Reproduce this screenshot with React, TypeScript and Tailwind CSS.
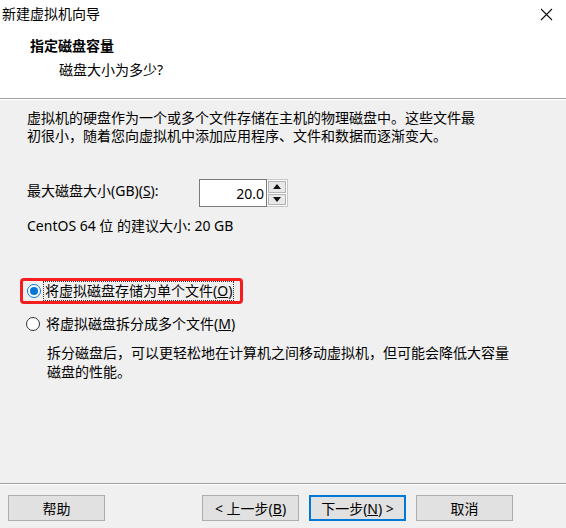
import React from "react";

const font = { fontFamily: '"Noto Sans", "Noto Sans CJK SC", sans-serif' };

function Radio({ checked }: { checked?: boolean }) {
  return (
    <span
      className={`inline-flex items-center justify-center w-[14px] h-[14px] rounded-full border bg-white shrink-0 ${
        checked ? "border-[#0078d7]" : "border-[#333333]"
      }`}
    >
      {checked && <span className="w-[8px] h-[8px] rounded-full bg-[#0078d7]" />}
    </span>
  );
}

function Button({ children, primary }: { children: React.ReactNode; primary?: boolean }) {
  return (
    <div
      className={`w-[97px] h-[26px] flex items-center justify-center bg-[#e1e1e1] text-[14px] text-black ${
        primary ? "border-2 border-[#0078d7]" : "border border-[#adadad]"
      }`}
    >
      {children}
    </div>
  );
}

export default function App() {
  return (
    <div className="w-[566px] h-[528px] bg-[#f0f0f0] flex flex-col text-black overflow-hidden" style={font}>
      {/* header */}
      <div className="bg-white h-[99px] flex flex-col border-b border-[#a0a0a0]">
        <div className="h-[26px] flex items-center justify-between pl-[2px] pr-[13px]">
          <span className="text-[14px] leading-[20px] pt-[2px]">新建虚拟机向导</span>
          <svg width="13" height="13" viewBox="0 0 13 13" className="mt-[2px]">
            <path d="M1 1 L12 12 M12 1 L1 12" stroke="#111" strokeWidth="1.1" />
          </svg>
        </div>
        <div className="pl-[30px] mt-[10px] text-[14px] leading-[20px] font-bold">指定磁盘容量</div>
        <div className="pl-[59px] mt-[4px] text-[14px] leading-[20px]">磁盘大小为多少?</div>
      </div>
      <div className="h-px bg-white" />

      {/* body */}
      <div className="flex-1 flex flex-col pl-[27px] pt-[9px]">
        <p className="text-[14px] leading-[18px] w-[460px]">
          虚拟机的硬盘作为一个或多个文件存储在主机的物理磁盘中。这些文件最
          <br />
          初很小，随着您向虚拟机中添加应用程序、文件和数据而逐渐变大。
        </p>

        <div className="flex items-center mt-[34px] h-[28px]">
          <span className="text-[14px] w-[172px] -mt-[5px]">
            最大磁盘大小(GB)(<u>S</u>):
          </span>
          <div className="flex h-[28px]">
            <div className="w-[68px] h-[28px] border border-[#7a7a7a] bg-white flex items-center justify-end pr-[2px] text-[14px]">
              20.0
            </div>
            <div className="w-[21px] h-[28px] border border-l-0 border-[#c8c8c8] bg-white flex flex-col p-px gap-px">
              <div className="flex-1 bg-[#e8e8e8] border border-[#b4b4b4] flex items-center justify-center">
                <svg width="8" height="5" viewBox="0 0 8 5">
                  <path d="M0 5 L4 0 L8 5 Z" fill="#111" />
                </svg>
              </div>
              <div className="flex-1 bg-[#e8e8e8] border border-[#b4b4b4] flex items-center justify-center">
                <svg width="8" height="5" viewBox="0 0 8 5">
                  <path d="M0 0 L8 0 L4 5 Z" fill="#111" />
                </svg>
              </div>
            </div>
          </div>
        </div>

        <div className="mt-[10px] text-[14px] leading-[18px]">CentOS 64 位 的建议大小: 20 GB</div>

        <div className="mt-[43px] -ml-[7px] w-[223px] h-[26px] border-[3px] border-[#f51d1d] rounded-[4px] flex items-center pl-[4px]">
          <Radio checked />
          <span className="ml-[2px] text-[14px] leading-[18px] border border-dotted border-[#333] px-[1px]">
            将虚拟磁盘存储为单个文件(<u>O</u>)
          </span>
        </div>

        <div className="mt-[7px] flex items-center h-[26px] -ml-[1px]">
          <Radio />
          <span className="ml-[6px] text-[14px] leading-[18px]">
            将虚拟磁盘拆分成多个文件(<u>M</u>)
          </span>
        </div>

        <p className="mt-[6px] ml-[20px] text-[14px] leading-[19px]">
          拆分磁盘后，可以更轻松地在计算机之间移动虚拟机，但可能会降低大容量
          <br />
          磁盘的性能。
        </p>
      </div>

      {/* footer */}
      <div className="h-px bg-[#a0a0a0]" />
      <div className="h-px bg-white" />
      <div className="h-[43px] flex items-start pt-[10px] pl-[8px]">
        <Button>帮助</Button>
        <div className="ml-[97px]">
          <Button>
            &lt; 上一步(<u>B</u>)
          </Button>
        </div>
        <div className="ml-[10px]">
          <Button primary>
            下一步(<u>N</u>) &gt;
          </Button>
        </div>
        <div className="ml-[10px]">
          <Button>取消</Button>
        </div>
      </div>
    </div>
  );
}
